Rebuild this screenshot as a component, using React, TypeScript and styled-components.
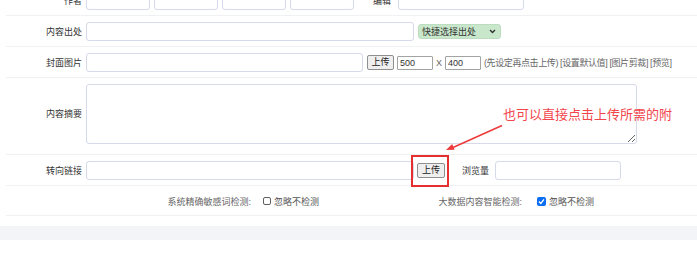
import React from 'react';
import styled, { createGlobalStyle } from 'styled-components';

const Global = createGlobalStyle`
  html, body { margin: 0; padding: 0; background: #fff; }
  body {
    font-family: "Liberation Sans", "Noto Sans CJK SC", sans-serif;
    font-size: 9px;
    color: #333;
  }
`;

const Page = styled.div`
  position: relative;
  width: 697px;
  height: 259px;
  overflow: hidden;
  background: #fff;
`;

const Form = styled.div`
  margin-top: -15px;
`;

const Row = styled.div<{ $padBottom?: number }>`
  display: grid;
  grid-template-columns: 76px 1fr;
  column-gap: 4px;
  align-items: center;
  margin-left: 6px;
  padding: 6px 0 ${(p) => p.$padBottom ?? 5}px;
  border-bottom: 1px solid #f0f1f3;
`;

const Label = styled.div`
  text-align: right;
  color: #333;
  font-size: 9px;
  line-height: 12px;
  white-space: nowrap;
`;

const Field = styled.div`
  display: flex;
  align-items: center;
  min-height: 19px;
`;

const TextInput = styled.input<{ $w: number; $mr?: number }>`
  box-sizing: border-box;
  width: ${(p) => p.$w}px;
  height: 19px;
  margin: 0 ${(p) => p.$mr ?? 0}px 0 0;
  padding: 0 4px;
  border: 1px solid #d6daea;
  border-radius: 3px;
  background: #fff;
  outline: none;
  font: inherit;
  color: #333;
`;

const SizeInput = styled.input`
  box-sizing: border-box;
  width: 36px;
  height: 14px;
  margin: 0;
  padding: 0 2px;
  border: 1px solid #a3a3a3;
  border-radius: 1px;
  background: #fff;
  outline: none;
  font: inherit;
  font-size: 9px;
  color: #333;
`;

const UploadButton = styled.button<{ $w: number; $ml?: number; $mr?: number }>`
  box-sizing: border-box;
  width: ${(p) => p.$w}px;
  height: 15px;
  margin: 0 ${(p) => p.$mr ?? 0}px 0 ${(p) => p.$ml ?? 0}px;
  padding: 0;
  border: 1px solid #8f8f8f;
  border-radius: 2px;
  background: #efefef;
  font: inherit;
  font-size: 9px;
  line-height: 13px;
  color: #222;
`;

const InlineText = styled.span<{ $ml?: number; $mr?: number; $color?: string; $tight?: boolean }>`
  margin: 0 ${(p) => p.$mr ?? 0}px 0 ${(p) => p.$ml ?? 0}px;
  color: ${(p) => p.$color ?? '#333'};
  font-size: 9px;
  line-height: 12px;
  letter-spacing: ${(p) => (p.$tight ? '-0.4px' : '0')};
  white-space: nowrap;
`;

const QuickSelect = styled.div`
  box-sizing: border-box;
  width: 83px;
  height: 15px;
  display: flex;
  align-items: center;
  justify-content: space-between;
  padding: 0 4px 0 3px;
  background: #c8e7cb;
  border: 1px solid #bcdcbf;
  border-radius: 3px;
  color: #333;
  font-size: 9px;
`;

const Summary = styled.textarea`
  box-sizing: border-box;
  width: 551px;
  height: 60px;
  margin: 0;
  padding: 3px 4px;
  border: 1px solid #d6daea;
  border-radius: 3px;
  background: #fff;
  outline: none;
  font: inherit;
  display: block;
`;

const CheckGrid = styled.div`
  display: grid;
  grid-template-columns: 271px 271px;
  align-items: center;
  min-height: 18px;
`;

const CheckCell = styled.div`
  display: flex;
  align-items: center;
`;

const CheckLabel = styled.span`
  width: 165px;
  text-align: right;
  color: #666;
  font-size: 9px;
  white-space: nowrap;
`;

const Box = styled.span<{ $checked?: boolean; $ml: number }>`
  box-sizing: border-box;
  display: inline-flex;
  align-items: center;
  justify-content: center;
  margin-left: ${(p) => p.$ml}px;
  width: ${(p) => (p.$checked ? 9 : 8)}px;
  height: ${(p) => (p.$checked ? 9 : 8)}px;
  border-radius: 2px;
  border: ${(p) => (p.$checked ? 'none' : '1px solid #5f5f5f')};
  background: ${(p) => (p.$checked ? '#0b6df2' : '#fff')};
`;

const CheckText = styled.span`
  margin-left: 3px;
  color: #555;
  font-size: 9px;
  white-space: nowrap;
`;

const Band = styled.div`
  margin-top: 10px;
  height: 14px;
  background: #f3f4f7;
`;

const Callout = styled.div`
  position: absolute;
  left: 503px;
  top: 105px;
  color: #f2454b;
  font-size: 13px;
  line-height: 17px;
  white-space: nowrap;
  font-family: "Noto Sans CJK SC", sans-serif;
`;

const Highlight = styled.div`
  position: absolute;
  left: 411px;
  top: 155px;
  width: 38px;
  height: 32px;
  box-sizing: border-box;
  border: 2px solid #e5302f;
`;

const ArrowLayer = styled.svg`
  position: absolute;
  left: 0;
  top: 0;
  pointer-events: none;
`;

function Check({ checked, ml }: { checked?: boolean; ml: number }) {
  return (
    <Box $checked={checked} $ml={ml}>
      {checked && (
        <svg width="7" height="7" viewBox="0 0 7 7">
          <path d="M1 3.6 L2.8 5.4 L6 1.4" fill="none" stroke="#fff" strokeWidth="1.4" />
        </svg>
      )}
    </Box>
  );
}

export default function App() {
  return (
    <Page>
      <Global />
      <Form>
        <Row>
          <Label>作者</Label>
          <Field>
            <TextInput $w={64} $mr={4} />
            <TextInput $w={64} $mr={4} />
            <TextInput $w={64} $mr={4} />
            <TextInput $w={64} />
            <InlineText $ml={19} $mr={7}>编辑</InlineText>
            <TextInput $w={126} />
          </Field>
        </Row>
        <Row>
          <Label>内容出处</Label>
          <Field>
            <TextInput $w={328} $mr={4} />
            <QuickSelect>
              <span>快捷选择出处</span>
              <svg width="7" height="5" viewBox="0 0 7 5">
                <path d="M1 1 L3.5 3.5 L6 1" fill="none" stroke="#333" strokeWidth="1.4" />
              </svg>
            </QuickSelect>
          </Field>
        </Row>
        <Row>
          <Label>封面图片</Label>
          <Field>
            <TextInput $w={277} $mr={4} />
            <UploadButton $w={27} $mr={3}>上传</UploadButton>
            <SizeInput defaultValue="500" />
            <InlineText $ml={3} $mr={3} $color="#666">X</InlineText>
            <SizeInput defaultValue="400" />
            <InlineText $ml={3} $color="#666" $tight>(先设定再点击上传) [设置默认值] [图片剪裁] [预览]</InlineText>
          </Field>
        </Row>
        <Row $padBottom={10}>
          <Label>内容摘要</Label>
          <Field>
            <Summary />
          </Field>
        </Row>
        <Row>
          <Label>转向链接</Label>
          <Field>
            <TextInput $w={328} />
            <UploadButton $w={28} $ml={3}>上传</UploadButton>
            <InlineText $ml={17} $mr={6}>浏览量</InlineText>
            <TextInput $w={126} />
          </Field>
        </Row>
        <Row>
          <span />
          <CheckGrid>
            <CheckCell>
              <CheckLabel>系统精确敏感词检测:</CheckLabel>
              <Check ml={12} />
              <CheckText>忽略不检测</CheckText>
            </CheckCell>
            <CheckCell>
              <CheckLabel>大数据内容智能检测:</CheckLabel>
              <Check checked ml={15} />
              <CheckText>忽略不检测</CheckText>
            </CheckCell>
          </CheckGrid>
        </Row>
      </Form>
      <Band />
      <Callout>也可以直接点击上传所需的附</Callout>
      <ArrowLayer width="697" height="259" viewBox="0 0 697 259">
        <path d="M502 125.5 L453 147.5" stroke="#ee3a3a" strokeWidth="1.5" fill="none" />
        <polygon points="446,150 454.6,149.8 452.2,143.9" fill="#ee3a3a" />
      </ArrowLayer>
      <Highlight />
    </Page>
  );
}
